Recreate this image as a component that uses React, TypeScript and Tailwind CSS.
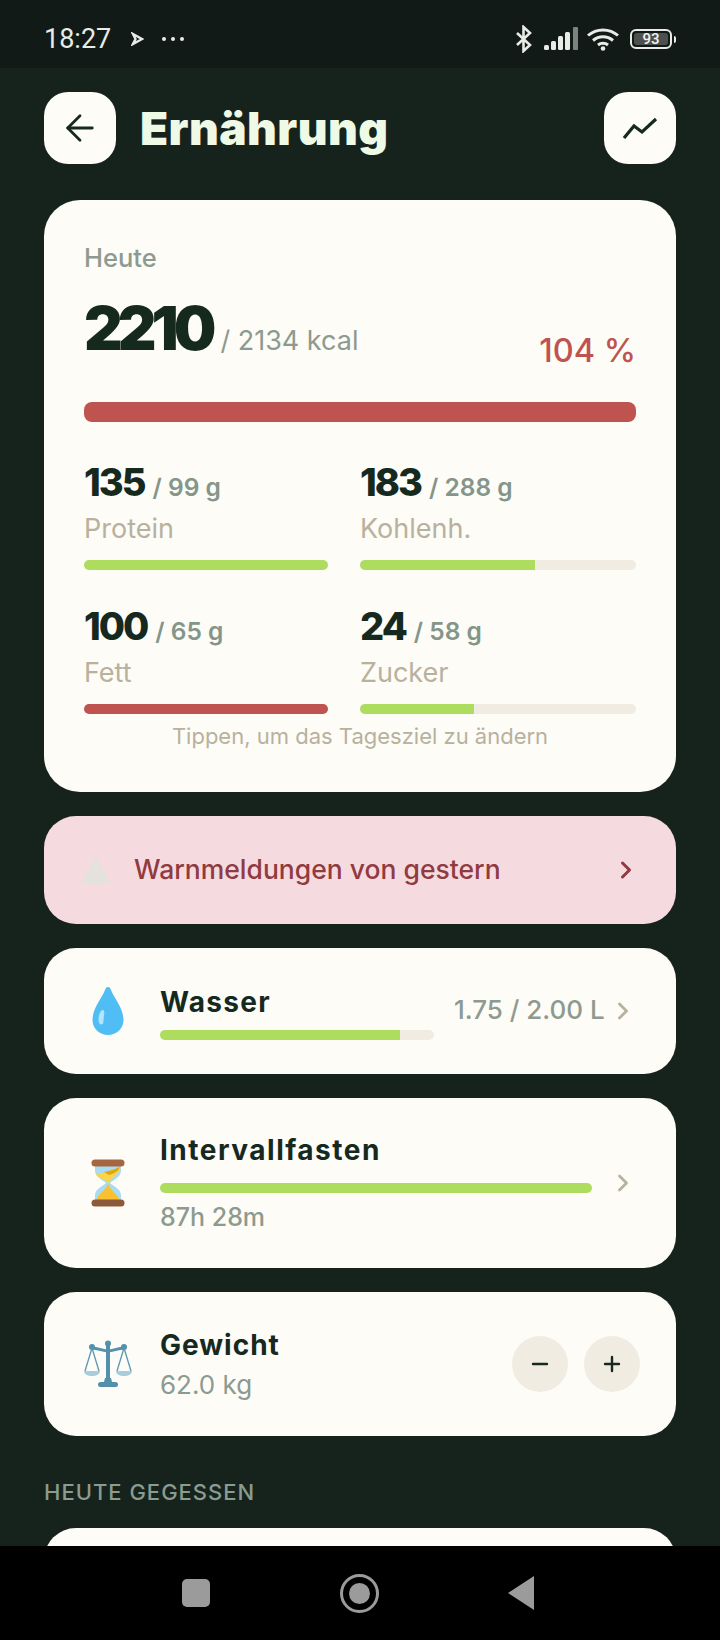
import { ArrowLeft, ChevronRight, Minus, Plus } from 'lucide-react'

const sans = 'font-["Inter",sans-serif]'

function Bar({ pct, color = 'bg-[#aedc5f]', className = '' }: { pct: number; color?: string; className?: string }) {
    return (
        <div className={`h-[10px] rounded-[5px] bg-[#f1ece2] overflow-hidden ${className}`}>
            <div className={`h-full ${color}`} style={{ width: `${pct}%` }} />
        </div>
    )
}

function Macro({ value, goal, label, pct, color }: { value: string; goal: string; label: string; pct: number; color?: string }) {
    return (
        <div>
            <div className="flex items-baseline h-[44px]">
                <span className="text-[38px] leading-[44px] font-extrabold tracking-[-2px] text-[#16291f]">{value}</span>
                <span className="ml-[8px] text-[24.500px] font-semibold text-[#84958a]">/ {goal}</span>
            </div>
            <div className="mt-[7px] h-[36px] text-[27px] leading-[36px] text-[#b8b19d]">{label}</div>
            <Bar pct={pct} color={color} className="mt-[13px]" />
        </div>
    )
}

function StatusIcons() {
    return (
        <div className="flex items-center">
            <svg width="18" height="28" viewBox="0 0 18 28" fill="none" stroke="#e8ebe7" strokeWidth="2.600">
                <path d="M2 8l13 12-6.500 6V2L15 8 2 20" />
            </svg>
            <svg className="ml-[11px]" width="35" height="24" viewBox="0 0 35 24">
                <rect x="0" y="18" width="5" height="5" rx="1.500" fill="#e8ebe7" />
                <rect x="7" y="14" width="5" height="9" rx="1.500" fill="#e8ebe7" />
                <rect x="14" y="9" width="5" height="14" rx="1.500" fill="#e8ebe7" />
                <rect x="21" y="5" width="5" height="18" rx="1.500" fill="#e8ebe7" />
                <rect x="29" y="0" width="5" height="23" rx="1" fill="#7c827e" />
            </svg>
            <svg className="ml-[7px]" width="34" height="24" viewBox="0 0 34 24" fill="none" stroke="#e8ebe7" strokeWidth="3">
                <path d="M2 8.500c8.500-7.500 21.500-7.500 30 0" />
                <path d="M7 13.500c5.800-5 14.200-5 20 0" />
                <path d="M12 18c2.800-2.300 7.200-2.300 10 0" />
                <circle cx="17" cy="21.500" r="2.300" fill="#e8ebe7" stroke="none" />
            </svg>
            <div className="ml-[10px] flex items-center">
                <div className="w-[42px] h-[20px] rounded-[6px] border-2 border-[#e8ebe7] p-[2px] flex">
                    <div className="flex-1 rounded-[3px] bg-[#4c514e] flex items-center justify-center text-[15px] leading-none font-medium text-[#f1f3f0] font-['Roboto',sans-serif]">93</div>
                </div>
                <div className="ml-[2px] w-[2px] h-[7px] rounded-r-sm bg-[#e8ebe7]" />
            </div>
        </div>
    )
}

function Drop() {
    return (
        <svg width="32" height="48" viewBox="0 0 32 48">
            <path d="M16 0c1.500 0 2.300 1.200 3 3 3 8 12.500 18 12.500 30C31.500 41.500 24.500 48 16 48S.5 41.500.5 33C.5 21 10 11 13 3c.7-1.800 1.500-3 3-3z" fill="#51bdf5" />
            <path d="M6.500 33c0-5 2-9.500 4-10 2 0 2 3 1.500 5.500-.5 2.500-.3 5-.8 7.500-.6 2.500-4.700 2-4.700-3z" fill="#b3e5fc" />
        </svg>
    )
}

function Hourglass() {
    return (
        <svg width="34" height="48" viewBox="0 0 34 48">
            <path d="M4 5h26v7c0 6-8 9-11 12 3 3 11 6 11 12v7H4v-7c0-6 8-9 11-12-3-3-11-6-11-12z" fill="#a9dcf2" />
            <path d="M5 15c7 0 16-4 24-7 0 6-7 10-10 14l-2 2-2-2c-3-2-8-3-10-7z" fill="#fbd449" />
            <path d="M13 13c6-1 11-3 16-5-2 5-7 7-11 8z" fill="#e2a610" />
            <path d="M17 24c1 7 10 10 12 18H5c2-8 11-11 12-18z" fill="#fbc02d" />
            <rect x="0.500" y="0.500" width="33" height="7" rx="3.500" fill="#a5673f" />
            <rect x="0.500" y="40.500" width="33" height="7" rx="3.500" fill="#8d5a39" />
        </svg>
    )
}

function Scale() {
    return (
        <svg width="50" height="48" viewBox="0 0 50 48" fill="none">
            <path d="M25 3v38" stroke="#5290ab" strokeWidth="4" />
            <path d="M9 8c6 0 11 3 16 3s10-3 16-3" stroke="#5290ab" strokeWidth="3" />
            <circle cx="25" cy="3.500" r="3" fill="#5290ab" />
            <circle cx="9" cy="7" r="3" fill="#5290ab" />
            <circle cx="41" cy="7" r="3" fill="#5290ab" />
            <path d="M9 8L2 31M9 8l7 23M41 8l-7 23M41 8l7 23" stroke="#5b97b1" strokeWidth="1.300" />
            <path d="M1 31h16c0 3.500-3.500 5-8 5s-8-1.500-8-5zM33 31h16c0 3.500-3.500 5-8 5s-8-1.500-8-5z" fill="#a9cddb" />
            <path d="M22 38h6l1 4h-8z" fill="#5290ab" />
            <rect x="15" y="42" width="20" height="5" rx="2.500" fill="#5290ab" />
        </svg>
    )
}

export default function App() {
    return (
        <div className={`w-[720px] h-[1640px] flex flex-col bg-[#16231d] overflow-hidden ${sans}`}>
            <div className="h-[68px] shrink-0 bg-[#111a16] px-[44px] pt-[10px] flex items-center justify-between">
                <div className="flex items-center">
                    <span className="font-['Roboto',sans-serif] text-[27px] text-[#e8ebe7]">18:27</span>
                    <svg className="ml-[20px]" width="13" height="14" viewBox="0 0 13 14" fill="none" stroke="#e8ebe7" strokeWidth="2.400">
                        <path d="M2 2l9 5-9 5 2.500-5z" />
                    </svg>
                    <div className="ml-[18px] flex gap-[5px]">
                        <div className="w-[4px] h-[4px] rounded-full bg-[#e8ebe7]" />
                        <div className="w-[4px] h-[4px] rounded-full bg-[#e8ebe7]" />
                        <div className="w-[4px] h-[4px] rounded-full bg-[#e8ebe7]" />
                    </div>
                </div>
                <StatusIcons />
            </div>

            <div className="flex-1 overflow-hidden px-[44px] pt-[24px]">
                <div className="flex items-center h-[72px]">
                    <div className="w-[72px] h-[72px] rounded-[24px] bg-[#fdfcf7] flex items-center justify-center">
                        <ArrowLeft size={42} strokeWidth={1.600} className="text-[#16291f]" />
                    </div>
                    <h1 className="ml-[24px] flex-1 text-[46px] font-black tracking-[0.4px] text-[#eef9e6]">Ernährung</h1>
                    <div className="w-[72px] h-[72px] rounded-[24px] bg-[#fdfcf7] flex items-center justify-center">
                        <svg width="36" height="24" viewBox="0 0 36 24" fill="none" stroke="#16291f" strokeWidth="3.200">
                            <path d="M2 22l10-12 8 6 14-13" />
                        </svg>
                    </div>
                </div>

                <div className="mt-[36px] h-[592px] rounded-[36px] bg-[#fdfcf7] px-[40px] pt-[40px]">
                    <div className="text-[25.500px] leading-[36px] font-medium text-[#8d9a90]">Heute</div>
                    <div className="mt-[16px] flex items-baseline h-[72px]">
                        <span className="text-[60px] leading-[72px] font-black tracking-[-5px] text-[#16291f]">2210</span>
                        <span className="ml-[9px] flex-1 text-[27px] text-[#8d9a90]">/ 2134 kcal</span>
                        <span className="relative top-[12px] text-[32.500px] font-medium text-[#bf5350]">104 %</span>
                    </div>
                    <Bar pct={100} color="bg-[#bf5350]" className="mt-[38px] h-[20px] rounded-[8px]" />
                    <div className="mt-[38px] grid grid-cols-[244px_276px] gap-x-[32px] gap-y-[34px]">
                        <Macro value="135" goal="99 g" label="Protein" pct={100} />
                        <Macro value="183" goal="288 g" label="Kohlenh." pct={63.400} />
                        <Macro value="100" goal="65 g" label="Fett" pct={100} color="bg-[#bf5350]" />
                        <Macro value="24" goal="58 g" label="Zucker" pct={41.400} />
                    </div>
                    <div className="mt-[8px] text-center text-[22px] leading-[28px] text-[#b8b19d]">Tippen, um das Tagesziel zu ändern</div>
                </div>

                <div className="mt-[24px] h-[108px] rounded-[32px] bg-[#f5dae0] px-[36px] flex items-center">
                    <svg width="32" height="28" viewBox="0 0 32 28">
                        <path d="M16 1l15 27H1z" fill="#e3e2dc" />
                        <rect x="14.800" y="10" width="2.400" height="9" fill="#ebe2e0" />
                        <rect x="14.800" y="21" width="2.400" height="3" fill="#ebe2e0" />
                    </svg>
                    <span className="ml-[22px] flex-1 text-[26.500px] font-medium text-[#913a3f]">Warnmeldungen von gestern</span>
                    <ChevronRight size={28} strokeWidth={2.600} className="text-[#913a3f]" />
                </div>

                <div className="mt-[24px] h-[126px] rounded-[32px] bg-[#fdfcf7] px-[36px] flex items-center">
                    <div className="w-[56px] flex justify-center"><Drop /></div>
                    <div className="ml-[24px] w-[274px] pt-[2px]">
                        <div className="text-[28px] leading-[36px] font-bold tracking-[1.300px] text-[#16291f]">Wasser</div>
                        <Bar pct={87.500} className="mt-[10px]" />
                    </div>
                    <span className="ml-[20px] flex-1 pb-[4px] text-[26px] font-medium text-[#8d9a90]">1.75 / 2.00 L</span>
                    <ChevronRight size={28} strokeWidth={2.400} className="mr-[3px] text-[#b8b19d]" />
                </div>

                <div className="mt-[24px] h-[170px] rounded-[32px] bg-[#fdfcf7] px-[36px] flex items-center">
                    <div className="w-[56px] flex justify-center"><Hourglass /></div>
                    <div className="ml-[24px] w-[432px]">
                        <div className="text-[28px] leading-[36px] font-bold tracking-[1.500px] text-[#16291f]">Intervallfasten</div>
                        <Bar pct={100} className="mt-[15px]" />
                        <div className="mt-[6px] text-[25px] leading-[36px] font-medium text-[#8d9a90]">87h 28m</div>
                    </div>
                    <ChevronRight size={28} strokeWidth={2.400} className="ml-[17px] text-[#b8b19d]" />
                </div>

                <div className="mt-[24px] h-[144px] rounded-[32px] bg-[#fdfcf7] px-[36px] flex items-center">
                    <div className="w-[56px] flex justify-center"><Scale /></div>
                    <div className="ml-[24px] flex-1 pt-[2px]">
                        <div className="text-[28px] leading-[36px] font-bold tracking-[1px] text-[#16291f]">Gewicht</div>
                        <div className="mt-[4px] text-[26px] leading-[36px] text-[#8d9a90]">62.0 kg</div>
                    </div>
                    <div className="flex gap-[16px]">
                        <div className="w-[56px] h-[56px] rounded-full bg-[#f1ece2] flex items-center justify-center">
                            <Minus size={24} strokeWidth={2.400} className="text-[#16291f]" />
                        </div>
                        <div className="w-[56px] h-[56px] rounded-full bg-[#f1ece2] flex items-center justify-center">
                            <Plus size={24} strokeWidth={2.400} className="text-[#16291f]" />
                        </div>
                    </div>
                </div>

                <div className="mt-[40px] text-[22px] leading-[32px] font-medium tracking-[1px] text-[#8a9c90]">HEUTE GEGESSEN</div>
                <div className="mt-[20px] h-[120px] rounded-[32px] bg-[#fdfcf7]" />
            </div>

            <div className="h-[94px] shrink-0 bg-black pr-[3px] flex items-center justify-center">
                <div className="w-[28px] h-[28px] rounded-[5px] bg-[#9b9b9b]" />
                <div className="ml-[130px] w-[39px] h-[39px] rounded-full border-[3px] border-[#9b9b9b] flex items-center justify-center">
                    <div className="w-[21px] h-[21px] rounded-full bg-[#9b9b9b]" />
                </div>
                <svg className="ml-[128px]" width="28" height="34" viewBox="0 0 28 34">
                    <path d="M27 0v34L1 17z" fill="#9b9b9b" />
                </svg>
            </div>
        </div>
    )
}
